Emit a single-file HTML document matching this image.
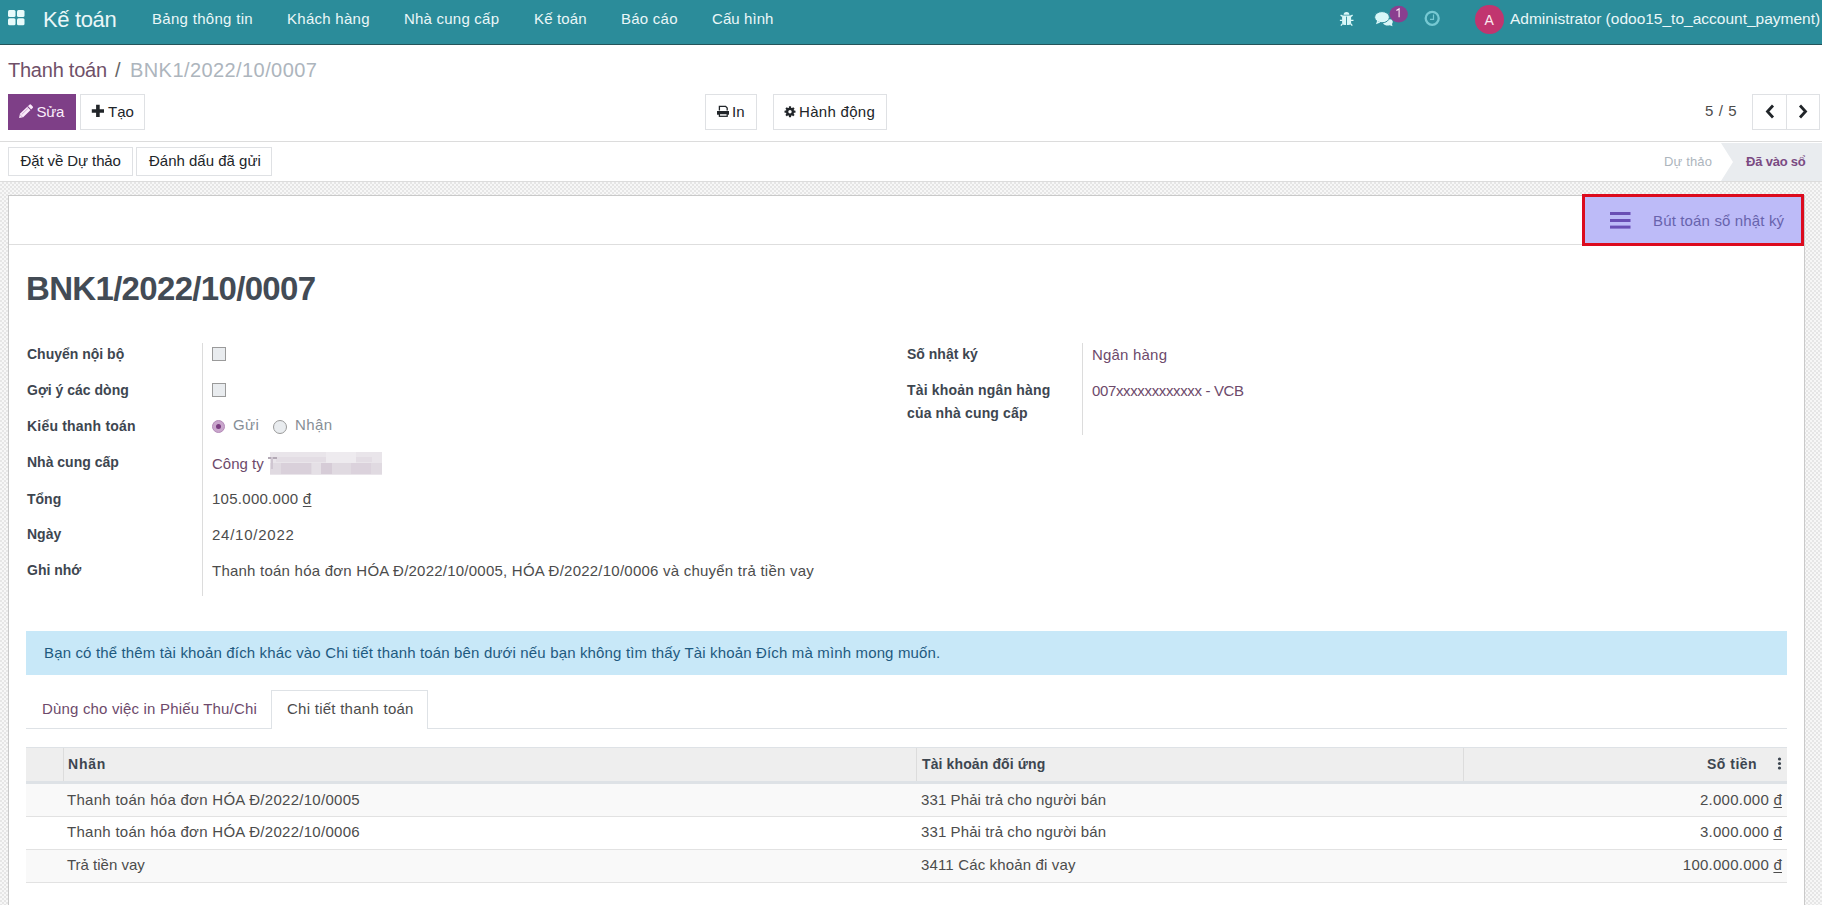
<!DOCTYPE html>
<html><head><meta charset="utf-8">
<style>
*{box-sizing:border-box;margin:0;padding:0}
html,body{width:1822px;height:905px;overflow:hidden;background:#fff}
body{position:relative;font-family:"Liberation Sans",sans-serif;font-size:15px;color:#4c4c4c}
.a{position:absolute;white-space:nowrap;line-height:normal}
.nav{position:absolute;left:0;top:0;width:1822px;height:45px;background:#2b8c9a;border-bottom:1px solid #24545a}
.nt{color:#eaf7f8;font-size:15px}
.btn{position:absolute;border:1px solid #dfe1e4;background:#fff}
.bg{position:absolute;left:0;top:182px;width:1822px;height:723px;background-color:#f7f7f7;
 background-image:linear-gradient(45deg,#e6e6e6 25%,transparent 25%,transparent 75%,#e6e6e6 75%),linear-gradient(45deg,#e6e6e6 25%,transparent 25%,transparent 75%,#e6e6e6 75%);
 background-size:4px 4px;background-position:0 0,2px 2px}
.lbl{font-weight:bold;font-size:14px;color:#3d4650}
.val{font-size:15px;color:#4c4c4c}
.lnk{color:#6d4a6b}
.dg{text-decoration:underline;text-underline-offset:2px;text-decoration-thickness:1px}
</style></head><body>
<!-- NAVBAR -->
<div class="nav"></div>
<svg class="a" style="left:7px;top:9px" width="20" height="18" viewBox="0 0 20 18">
 <rect x="1" y="1" width="7.5" height="7" rx="1.5" fill="#e8fbfb"/>
 <rect x="10" y="1" width="7.5" height="7" rx="1.5" fill="#e8fbfb"/>
 <rect x="1" y="9.2" width="7.5" height="7" rx="1.5" fill="#e8fbfb"/>
 <rect x="10" y="9.2" width="7.5" height="7" rx="1.5" fill="#e8fbfb"/>
</svg>
<div class="a nt" style="left:43px;top:7px;font-size:22px;letter-spacing:-0.35px">Kế toán</div>
<div class="a nt" style="left:152px;top:10px;letter-spacing:0.3px">Bảng thông tin</div>
<div class="a nt" style="left:287px;top:10px;letter-spacing:0.27px">Khách hàng</div>
<div class="a nt" style="left:404px;top:10px;letter-spacing:0.22px">Nhà cung cấp</div>
<div class="a nt" style="left:534px;top:10px;letter-spacing:0.15px">Kế toán</div>
<div class="a nt" style="left:621px;top:10px;letter-spacing:0.25px">Báo cáo</div>
<div class="a nt" style="left:712px;top:10px;letter-spacing:0.08px">Cấu hình</div>

<!-- bug icon -->
<svg class="a" style="left:1336px;top:8px" width="22" height="22" viewBox="0 0 22 22">
 <path d="M7.6 6.8 A2.9 2.9 0 0 1 13.4 6.8 Z" fill="#d9f7f8"/>
 <path d="M6.1 7.5 H15.1 V14.5 Q15.1 17 12.5 17 H8.7 Q6.1 17 6.1 14.5 Z" fill="#d9f7f8"/>
 <rect x="10.1" y="8.6" width="0.9" height="8.4" fill="#2b8c9a"/>
 <path d="M6.5 8.3 L4.6 7.1 M14.7 8.3 L16.6 7.1 M3.9 12.4 H6.4 M14.8 12.4 H17.5 M6.6 15.6 L4.9 17.6 M14.6 15.6 L16.3 17.6" stroke="#d9f7f8" stroke-width="1.4"/>
</svg>
<!-- chat icon -->
<svg class="a" style="left:1370px;top:2px" width="42" height="28" viewBox="0 0 42 28">
 <path d="M13.5 18 C14.5 17 19 16.5 21.5 17.5 C23 18.5 23.2 20.5 22 22 L22.5 24.3 L19.8 23.3 C17 24 14.5 23.4 13.2 21.5Z" fill="#d9f7f8"/>
 <ellipse cx="12" cy="15.2" rx="7.4" ry="5.6" fill="#d9f7f8" stroke="#2b8c9a" stroke-width="1"/>
 <path d="M7.2 18.8 L5.9 22.2 L10.3 20.6 Z" fill="#d9f7f8"/>
 <ellipse cx="28.7" cy="12.1" rx="9.2" ry="8.3" fill="#8a3f8f"/>
 <path d="M29.1 15.3 V6.9 L26.4 8.6" fill="none" stroke="#fbe6f4" stroke-width="1.15"/>
</svg>
<!-- clock -->
<svg class="a" style="left:1424px;top:10px" width="17" height="17" viewBox="0 0 17 17">
 <circle cx="8.2" cy="8.3" r="6.5" fill="none" stroke="#76c9d3" stroke-width="2.3"/>
 <path d="M9.5 4.4 V9.4 H6" fill="none" stroke="#76c9d3" stroke-width="1.2"/>
</svg>
<!-- avatar -->
<div class="a" style="left:1475.3px;top:5.2px;width:28.5px;height:28.5px;border-radius:50%;background:#c1356f"></div>
<div class="a" style="left:1484.6px;top:12.3px;font-size:14px;color:#fbe9f0">A</div>
<div class="a nt" style="left:1510px;top:10px;font-size:15.5px;letter-spacing:0.0px">Administrator (odoo15_to_account_payment)</div>

<!-- CONTROL PANEL -->
<div class="a" style="left:8px;top:59px;font-size:20px;color:#6f5068;letter-spacing:-0.24px">Thanh toán</div>
<div class="a" style="left:115px;top:59px;font-size:20px;color:#666">/</div>
<div class="a" style="left:130px;top:59px;font-size:20px;color:#adb5bd;letter-spacing:0.42px">BNK1/2022/10/0007</div>

<div class="a" style="left:8px;top:94px;width:68px;height:36px;background:#7e3f87"></div>
<svg class="a" style="left:17px;top:102px" width="18" height="18" viewBox="0 0 18 18">
 <g transform="translate(2.1 15.9) rotate(-44)">
  <path d="M0 0 L3.4 -2.35 H16.6 Q17.8 -2.35 17.8 -1.2 V1.2 Q17.8 2.35 16.6 2.35 H3.4 Z" fill="#fbe9fb"/>
  <rect x="13.6" y="-2.4" width="0.9" height="4.8" fill="#7e3f87"/>
  <rect x="4.4" y="-0.9" width="8.6" height="0.55" fill="#7e3f87" opacity="0.6"/>
  <rect x="2.6" y="-2.4" width="0.6" height="4.8" fill="#7e3f87" opacity="0.5"/>
 </g>
</svg>
<div class="a" style="left:36.5px;top:103px;color:#fbeefb;letter-spacing:-0.3px">Sửa</div>

<div class="btn" style="left:80px;top:94px;width:65px;height:36px"></div>
<svg class="a" style="left:91px;top:104px" width="14" height="14" viewBox="0 0 14 14">
 <path d="M5.1 0.8 H8.7 V5.2 H13 V8.8 H8.7 V13 H5.1 V8.8 H0.8 V5.2 H5.1 Z" fill="#212529"/>
</svg>
<div class="a" style="left:108px;top:103px;color:#212529">Tạo</div>

<div class="btn" style="left:705px;top:94px;width:52px;height:36px"></div>
<svg class="a" style="left:716px;top:105px" width="14" height="13" viewBox="0 0 14 13">
 <path d="M3.4 5.5 V1.4 H9.6 L11.2 3 V5.5" fill="none" stroke="#212529" stroke-width="1.3"/>
 <rect x="1" y="6" width="12" height="3.7" fill="#212529"/>
 <rect x="3.4" y="8.6" width="7.8" height="2.7" fill="#fff" stroke="#212529" stroke-width="1.25"/>
</svg>
<div class="a" style="left:732px;top:103px;color:#212529">In</div>

<div class="btn" style="left:773px;top:94px;width:114px;height:36px"></div>
<svg class="a" style="left:784px;top:106px" width="12" height="12" viewBox="0 0 12 12">
 <g fill="#212529"><circle cx="6" cy="5.7" r="4"/>
 <rect x="4.9" y="0.2" width="2.2" height="11" rx="0.5"/><rect x="0.5" y="4.6" width="11" height="2.2" rx="0.5"/>
 <rect x="4.9" y="0.2" width="2.2" height="11" rx="0.5" transform="rotate(45 6 5.7)"/><rect x="4.9" y="0.2" width="2.2" height="11" rx="0.5" transform="rotate(-45 6 5.7)"/></g>
 <circle cx="6" cy="5.7" r="1.7" fill="#fff"/>
</svg>
<div class="a" style="left:799px;top:103px;color:#212529;letter-spacing:0.3px">Hành động</div>

<div class="a" style="left:1705px;top:102px;color:#4c4c4c;letter-spacing:0.6px">5 / 5</div>
<div class="btn" style="left:1752px;top:94px;width:35px;height:36px"></div>
<div class="btn" style="left:1786px;top:94px;width:34px;height:36px"></div>
<svg class="a" style="left:1764px;top:104px" width="12" height="15" viewBox="0 0 12 15">
 <path d="M9 1.5 L3.5 7.5 L9 13.5" fill="none" stroke="#212529" stroke-width="2.8"/>
</svg>
<svg class="a" style="left:1797px;top:104px" width="12" height="15" viewBox="0 0 12 15">
 <path d="M3 1.5 L8.5 7.5 L3 13.5" fill="none" stroke="#212529" stroke-width="2.8"/>
</svg>

<div class="a" style="left:0;top:141px;width:1822px;height:1px;background:#dcdcdc"></div>

<!-- STATUS BAR -->
<div class="btn" style="left:8px;top:147px;width:125px;height:29px"></div>
<div class="a" style="left:20.5px;top:152px;color:#212529;letter-spacing:-0.1px">Đặt về Dự thảo</div>
<div class="btn" style="left:136px;top:147px;width:136px;height:29px"></div>
<div class="a" style="left:149px;top:152px;color:#212529">Đánh dấu đã gửi</div>

<svg class="a" style="left:1720px;top:143px" width="102" height="38" viewBox="0 0 102 38">
 <path d="M1 0 H102 V38 H1 L13 19 Z" fill="#e9ecef"/>
</svg>
<div class="a" style="left:1664px;top:154px;font-size:13px;color:#adb5bd;letter-spacing:0.15px">Dự thảo</div>
<div class="a" style="left:1746px;top:154px;font-size:13px;font-weight:bold;color:#7a4a82;letter-spacing:-0.2px">Đã vào sổ</div>

<div class="a" style="left:0;top:181px;width:1822px;height:1px;background:#dcdcdc"></div>

<!-- BACKGROUND -->
<div class="bg"></div>

<!-- SHEET -->
<div class="a" style="left:8px;top:195px;width:1797px;height:710px;background:#fff;border:1px solid #c9c9c9;border-bottom:none"></div>
<div class="a" style="left:9px;top:244px;width:1573px;height:1px;background:#dedede"></div>

<div class="a" style="left:1582px;top:194px;width:222px;height:52px;background:#bdbbf8;border:3px solid #dc0b1e"></div>
<svg class="a" style="left:1610px;top:211px" width="21" height="19" viewBox="0 0 21 19">
 <rect x="0" y="1" width="20.5" height="3" fill="#6a4fb5"/>
 <rect x="0" y="8" width="20.5" height="3" fill="#6a4fb5"/>
 <rect x="0" y="14.6" width="20.5" height="3" fill="#6a4fb5"/>
</svg>
<div class="a" style="left:1653px;top:212px;font-size:15px;color:#6863ad;letter-spacing:0.15px">Bút toán sổ nhật ký</div>

<div class="a" style="left:26px;top:270px;font-size:33px;font-weight:bold;color:#434b55;letter-spacing:-0.68px">BNK1/2022/10/0007</div>

<!-- LEFT GROUP -->
<div class="a" style="left:202px;top:343px;width:1px;height:253px;background:#dcdcdc"></div>
<div class="a lbl" style="left:27px;top:346px">Chuyển nội bộ</div>
<div class="a lbl" style="left:27px;top:382px">Gợi ý các dòng</div>
<div class="a lbl" style="left:27px;top:418px;letter-spacing:0.2px">Kiểu thanh toán</div>
<div class="a lbl" style="left:27px;top:454px">Nhà cung cấp</div>
<div class="a lbl" style="left:27px;top:491px">Tổng</div>
<div class="a lbl" style="left:27px;top:526px">Ngày</div>
<div class="a lbl" style="left:27px;top:562.4px">Ghi nhớ</div>

<div class="a" style="left:212px;top:347px;width:14px;height:14px;background:#e9ecef;border:1px solid #9a9a9a"></div>
<div class="a" style="left:212px;top:383px;width:14px;height:14px;background:#e9ecef;border:1px solid #9a9a9a"></div>
<div class="a" style="left:212px;top:420px;width:13px;height:13px;border-radius:50%;background:#c9a6cc;border:1px solid #b48ab8"></div>
<div class="a" style="left:216px;top:424px;width:5px;height:5px;border-radius:50%;background:#7a3c80"></div>
<div class="a" style="left:233px;top:416px;color:#868e96;letter-spacing:0.4px">Gửi</div>
<div class="a" style="left:273px;top:420px;width:14px;height:14px;border-radius:50%;background:#e9ecef;border:1px solid #9a9a9a"></div>
<div class="a" style="left:295px;top:416px;color:#868e96;letter-spacing:0.4px">Nhận</div>

<div class="a val lnk" style="left:212px;top:455px">Công ty</div>
<div class="a" style="left:270px;top:452px;width:112px;height:23px;background:#e9e5ea"></div>
<div class="a" style="left:270px;top:463px;width:112px;height:11px;background:#e0dae1"></div>
<div class="a" style="left:281px;top:463px;width:30px;height:11px;background:#d9d0da"></div>
<div class="a" style="left:321px;top:463px;width:11px;height:11px;background:#d6ccd7"></div>
<div class="a" style="left:312px;top:463px;width:9px;height:11px;background:#e5e0e6"></div>
<div class="a" style="left:351px;top:463px;width:20px;height:11px;background:#dbd2dc"></div>
<div class="a" style="left:276px;top:457px;width:96px;height:5px;background:#e3dde4"></div>
<div class="a" style="left:326px;top:452px;width:30px;height:11px;background:#eeebef"></div>
<div class="a" style="left:268px;top:457px;width:9px;height:1.5px;background:#b3a9b5"></div>
<div class="a" style="left:271px;top:457px;width:1.5px;height:12px;background:#cfc6d1"></div>
<div class="a val" style="left:212px;top:490px;letter-spacing:0.27px">105.000.000 <span class="dg">đ</span></div>
<div class="a val" style="left:212px;top:526px;letter-spacing:0.75px">24/10/2022</div>
<div class="a val" style="left:212px;top:562px;letter-spacing:0.23px">Thanh toán hóa đơn HÓA Đ/2022/10/0005, HÓA Đ/2022/10/0006 và chuyển trả tiền vay</div>

<!-- RIGHT GROUP -->
<div class="a" style="left:1082px;top:343px;width:1px;height:92px;background:#dcdcdc"></div>
<div class="a lbl" style="left:907px;top:346px">Số nhật ký</div>
<div class="a lbl" style="left:907px;top:382px;letter-spacing:0.18px">Tài khoản ngân hàng</div>
<div class="a lbl" style="left:907px;top:405px;letter-spacing:0.15px">của nhà cung cấp</div>
<div class="a val lnk" style="left:1092px;top:346px;letter-spacing:0.2px">Ngân hàng</div>
<div class="a val lnk" style="left:1092px;top:382px;letter-spacing:-0.36px">007xxxxxxxxxxxx - VCB</div>

<!-- ALERT -->
<div class="a" style="left:26px;top:631px;width:1761px;height:44px;background:#c8e8f8"></div>
<div class="a" style="left:44px;top:644px;color:#1e5a80;letter-spacing:0.15px">Bạn có thể thêm tài khoản đích khác vào Chi tiết thanh toán bên dưới nếu bạn không tìm thấy Tài khoản Đích mà mình mong muốn.</div>

<!-- TABS -->
<div class="a" style="left:26px;top:728px;width:1761px;height:1px;background:#dee2e6"></div>
<div class="a" style="left:271px;top:690px;width:157px;height:39px;background:#fff;border:1px solid #dee2e6;border-bottom:none"></div>
<div class="a" style="left:42px;top:700px;color:#6d4a6b;letter-spacing:0.17px">Dùng cho việc in Phiếu Thu/Chi</div>
<div class="a" style="left:287px;top:700px;color:#4c4c4c;letter-spacing:0.26px">Chi tiết thanh toán</div>

<!-- TABLE -->
<div class="a" style="left:26px;top:747px;width:1761px;height:34px;background:#eeeeee;border-top:1px solid #dee2e6"></div>
<div class="a" style="left:26px;top:781px;width:1761px;height:3px;background:#dee2e6"></div>
<div class="a" style="left:63px;top:748px;width:1px;height:33px;background:#dcdcdc"></div>
<div class="a" style="left:916px;top:748px;width:1px;height:33px;background:#dcdcdc"></div>
<div class="a" style="left:1463px;top:748px;width:1px;height:33px;background:#dcdcdc"></div>
<div class="a lbl" style="left:68px;top:756px;letter-spacing:0.8px">Nhãn</div>
<div class="a lbl" style="left:922px;top:756px;letter-spacing:0.12px">Tài khoản đối ứng</div>
<div class="a lbl" style="left:1707px;top:756px;letter-spacing:0.5px">Số tiền</div>
<svg class="a" style="left:1777px;top:757px" width="5" height="13" viewBox="0 0 5 13">
 <circle cx="2.5" cy="2" r="1.6" fill="#3d4650"/><circle cx="2.5" cy="6.5" r="1.6" fill="#3d4650"/><circle cx="2.5" cy="11" r="1.6" fill="#3d4650"/>
</svg>

<div class="a" style="left:26px;top:784px;width:1761px;height:32px;background:#f9f9f9"></div>
<div class="a" style="left:26px;top:816px;width:1761px;height:1px;background:#e2e2e2"></div>
<div class="a" style="left:26px;top:849px;width:1761px;height:1px;background:#e2e2e2"></div>
<div class="a" style="left:26px;top:850px;width:1761px;height:32px;background:#f9f9f9"></div>
<div class="a" style="left:26px;top:882px;width:1761px;height:1px;background:#e2e2e2"></div>

<div class="a val" style="left:67px;top:791px;letter-spacing:0.28px">Thanh toán hóa đơn HÓA Đ/2022/10/0005</div>
<div class="a val" style="left:67px;top:823px;letter-spacing:0.28px">Thanh toán hóa đơn HÓA Đ/2022/10/0006</div>
<div class="a val" style="left:67px;top:856px">Trả tiền vay</div>
<div class="a val" style="left:921px;top:791px;letter-spacing:0.1px">331 Phải trả cho người bán</div>
<div class="a val" style="left:921px;top:823px;letter-spacing:0.1px">331 Phải trả cho người bán</div>
<div class="a val" style="left:921px;top:856px;letter-spacing:0.15px">3411 Các khoản đi vay</div>
<div class="a val" style="right:40px;top:791px;letter-spacing:0.25px">2.000.000 <span class="dg">đ</span></div>
<div class="a val" style="right:40px;top:823px;letter-spacing:0.25px">3.000.000 <span class="dg">đ</span></div>
<div class="a val" style="right:40px;top:856px;letter-spacing:0.25px">100.000.000 <span class="dg">đ</span></div>
</body></html>
